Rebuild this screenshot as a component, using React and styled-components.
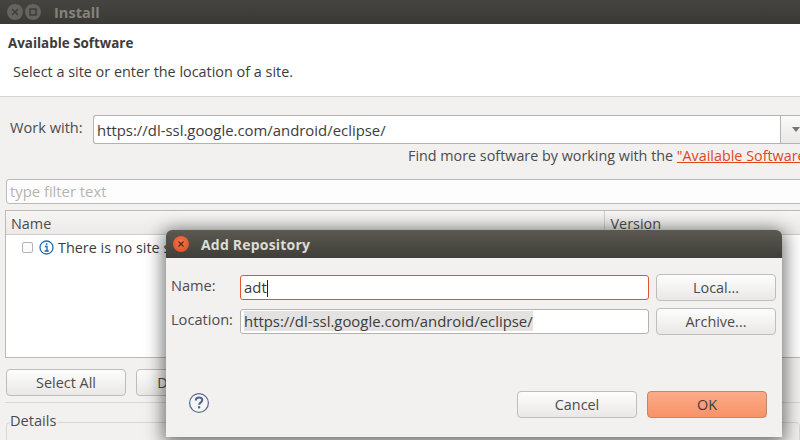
import styled, { createGlobalStyle } from "styled-components";

const Global = createGlobalStyle`
  html, body { margin: 0; padding: 0; background: #f2f1f0; }
  * { box-sizing: border-box; }
`;

const Win = styled.div`
  position: relative;
  width: 800px;
  height: 440px;
  overflow: hidden;
  background: #f2f1f0;
  font-family: "Open Sans", "Noto Sans", sans-serif;
  font-size: 14.4px;
  color: #4c4c4c;
`;

const TitleBar = styled.div`
  height: 24px;
  display: flex;
  align-items: center;
  padding-left: 7px;
  gap: 2px;
  background: linear-gradient(#45443f, #3a3935);
`;

const WinDot = styled.div`
  width: 16px;
  height: 16px;
  border-radius: 50%;
  background: #64635e;
  color: #3c3b37;
  display: flex;
  align-items: center;
  justify-content: center;
`;

const WinTitle = styled.div`
  margin-left: 11px;
  font-weight: 700;
  font-size: 14.6px;
  color: #85827c;
`;

const Banner = styled.div`
  height: 73px;
  background: #fff;
  border-bottom: 1px solid #d6d4d1;
  padding: 10px 8px 0;
`;

const BannerTitle = styled.div`
  font-weight: 700;
  font-size: 13.4px;
  line-height: 18px;
  color: #3c3c3c;
`;

const BannerText = styled.div`
  margin: 10px 0 0 5px;
  line-height: 20px;
  color: #3c3c3c;
`;

const WorkRow = styled.div`
  display: flex;
  align-items: stretch;
  height: 29px;
  margin-top: 18px;
`;

const WorkLabel = styled.div`
  width: 93px;
  padding: 1px 0 0 10px;
  line-height: 22px;
  font-size: 14.6px;
`;

const Combo = styled.div`
  flex: 1;
  background: #fff;
  border: 1px solid #b5b3b0;
  border-right: none;
  border-radius: 3px 0 0 3px;
  padding-left: 3px;
  line-height: 28px;
  font-size: 14.9px;
  color: #3c3c3c;
  white-space: nowrap;
`;

const ComboBtn = styled.div`
  width: 20px;
  border: 1px solid #b5b3b0;
  border-right: none;
  background: linear-gradient(#fafafa, #e9e8e6);
  display: flex;
  align-items: center;
  padding-left: 11px;
  &::after {
    content: "";
    border-left: 4px solid transparent;
    border-right: 4px solid transparent;
    border-top: 5px solid #77756f;
  }
`;

const Hint = styled.div`
  height: 35px;
  padding: 2px 0 0 408px;
  line-height: 20px;
  font-size: 14.35px;
  white-space: nowrap;
  overflow: hidden;
`;

const HintLink = styled.span`
  color: #e1461b;
  text-decoration: underline;
`;

const Filter = styled.div`
  height: 25px;
  margin: 0 -4px 0 6px;
  background: #fdfdfd;
  border: 1px solid #bcbab6;
  border-radius: 3px;
  padding-left: 3px;
  line-height: 23px;
  font-size: 14.8px;
  color: #b6b4b0;
`;

const Tree = styled.div`
  height: 148px;
  margin: 6px -4px 0 5px;
  background: #fff;
  border: 1px solid #bcbab6;
`;

const TreeHead = styled.div`
  display: flex;
  height: 24px;
  background: linear-gradient(#f6f5f4, #ebeae8);
  border-bottom: 1px solid #cfcdca;
  line-height: 26px;
`;

const HeadCell = styled.div`
  width: ${(p) => p.$w};
  padding-left: 5px;
  border-left: ${(p) => (p.$sep ? "1px solid #cfcdca" : "none")};
`;

const TreeRow = styled.div`
  display: flex;
  align-items: center;
  height: 24px;
  padding-left: 16px;
  color: #3c3c3c;
  white-space: nowrap;
`;

const Check = styled.div`
  width: 11px;
  height: 11px;
  border: 1px solid #b5b3b0;
  border-radius: 2px;
  background: #fbfbfb;
  margin-right: 6px;
`;

const InfoIcon = styled.svg`
  margin-right: 4px;
`;

const BtnRow = styled.div`
  display: flex;
  gap: 10px;
  margin: 11px 0 0 6px;
`;

const Btn = styled.div`
  width: 120px;
  height: 27px;
  flex: none;
  border: 1px solid ${(p) => (p.$primary ? "#b98a72" : "#bfbdb9")};
  border-radius: 4px;
  background: ${(p) =>
    p.$primary
      ? "linear-gradient(#fbab88, #f79268)"
      : "linear-gradient(#fdfdfd, #e9e8e6)"};
  text-align: center;
  line-height: 25px;
  color: ${(p) => (p.$primary ? "#3c3c3c" : "#4c4c4c")};
`;

const Rule = styled.div`
  height: 1px;
  margin: 6px 0 0 5px;
  background: #d9d7d4;
`;

const Group = styled.div`
  position: relative;
  height: 40px;
  margin: 19px 0 0 6px;
  border: 1px solid #d9d7d4;
  border-radius: 4px;
`;

const GroupLabel = styled.div`
  position: absolute;
  left: 3px;
  top: -13px;
  padding-right: 1px;
  line-height: 20px;
  font-size: 14.6px;
  background: #f2f1f0;
`;

const Dialog = styled.div`
  position: absolute;
  left: 166px;
  top: 230px;
  width: 616px;
  height: 207px;
  background: #f2f1f0;
  border-radius: 6px 6px 0 0;
  box-shadow: 0 3px 18px 3px rgba(0, 0, 0, 0.55);
  display: flex;
  flex-direction: column;
`;

const DialogBar = styled.div`
  height: 28px;
  flex: none;
  display: flex;
  align-items: center;
  padding-left: 7px;
  border-radius: 6px 6px 0 0;
  background: linear-gradient(#5b5950, #3f3e39);
`;

const CloseDot = styled.div`
  width: 16px;
  height: 16px;
  border-radius: 50%;
  background: radial-gradient(circle at 50% 40%, #f4794f, #d9471f);
  display: flex;
  align-items: center;
  justify-content: center;
`;

const DialogTitle = styled.div`
  margin-left: 12px;
  font-weight: 700;
  font-size: 14px;
  letter-spacing: 0.2px;
  color: #dfdbd2;
`;

const Form = styled.div`
  display: grid;
  grid-template-columns: 69px 409px 127px;
  row-gap: 7px;
  padding: 16px 0 0 5px;
`;

const FieldLabel = styled.div`
  line-height: 23px;
  align-self: start;
  font-size: 14.6px;
`;

const Field = styled.div`
  height: 25px;
  align-self: center;
  background: #fff;
  border: 1px solid ${(p) => (p.$focus ? "#e0562a" : "#b5b3b0")};
  border-radius: 3px;
  padding-left: 3px;
  line-height: 23px;
  font-size: 14.9px;
  color: #3c3c3c;
  white-space: nowrap;
`;

const Caret = styled.span`
  display: inline-block;
  width: 1px;
  height: 17px;
  vertical-align: -4px;
  background: #222;
`;

const Selected = styled.span`
  background: #e3e2e0;
`;

const SideBtn = styled(Btn)`
  margin-left: 7px;
`;

const Footer = styled.div`
  margin-top: auto;
  height: 46px;
  padding: 0 15px 19px 22px;
  display: flex;
  align-items: center;
  gap: 10px;
`;

const Help = styled.svg`
  margin: -3px auto 0 0;
`;

export default function App() {
  return (
    <Win>
      <Global />
      <TitleBar>
        <WinDot>
          <svg width="8" height="8" viewBox="0 0 8 8">
            <path d="M1 1l6 6M7 1L1 7" stroke="#3c3b37" strokeWidth="1.4" />
          </svg>
        </WinDot>
        <WinDot>
          <svg width="8" height="8" viewBox="0 0 8 8">
            <rect x="1" y="1" width="6" height="6" fill="none" stroke="#3c3b37" strokeWidth="1.4" />
          </svg>
        </WinDot>
        <WinTitle>Install</WinTitle>
      </TitleBar>
      <Banner>
        <BannerTitle>Available Software</BannerTitle>
        <BannerText>Select a site or enter the location of a site.</BannerText>
      </Banner>
      <WorkRow>
        <WorkLabel>Work with:</WorkLabel>
        <Combo>https://dl-ssl.google.com/android/eclipse/</Combo>
        <ComboBtn />
      </WorkRow>
      <Hint>
        Find more software by working with the <HintLink>"Available Software Sites"</HintLink> preferences.
      </Hint>
      <Filter>type filter text</Filter>
      <Tree>
        <TreeHead>
          <HeadCell $w="600px">Name</HeadCell>
          <HeadCell $w="199px" $sep>Version</HeadCell>
        </TreeHead>
        <TreeRow>
          <Check />
          <InfoIcon width="15" height="15" viewBox="0 0 15 15">
            <circle cx="7.5" cy="7.5" r="6.5" fill="#fff" stroke="#1f6fb5" strokeWidth="1.3" />
            <path d="M5.800 6.500h2.200v4.300M5.500 11h4.200" fill="none" stroke="#1f5f9e" strokeWidth="1.3" />
            <rect x="6.800" y="3.200" width="1.600" height="1.600" fill="#1f5f9e" />
          </InfoIcon>
          There is no site selected.
        </TreeRow>
      </Tree>
      <BtnRow>
        <Btn>Select All</Btn>
        <Btn>Deselect All</Btn>
      </BtnRow>
      <Rule />
      <Group>
        <GroupLabel>Details</GroupLabel>
      </Group>

      <Dialog>
        <DialogBar>
          <CloseDot>
            <svg width="8" height="8" viewBox="0 0 8 8">
              <path d="M1.500 1.500l5 5M6.500 1.500l-5 5" stroke="#5a2412" strokeWidth="1.2" />
            </svg>
          </CloseDot>
          <DialogTitle>Add Repository</DialogTitle>
        </DialogBar>
        <Form>
          <FieldLabel>Name:</FieldLabel>
          <Field $focus>adt<Caret /></Field>
          <SideBtn>Local...</SideBtn>
          <FieldLabel>Location:</FieldLabel>
          <Field><Selected>https://dl-ssl.google.com/android/eclipse/</Selected></Field>
          <SideBtn>Archive...</SideBtn>
        </Form>
        <Footer>
          <Help width="22" height="22" viewBox="0 0 22 22">
            <circle cx="11" cy="11" r="9.400" fill="#f6f6f6" stroke="#5a6f92" strokeWidth="1.3" />
            <path d="M7.800 8.400c0-2 1.500-3 3.300-3s3.200 1 3.200 2.700c0 2.500-3.200 2.500-3.200 4.700" fill="none" stroke="#4f6488" strokeWidth="2" />
            <rect x="10" y="14.200" width="2.200" height="2.200" fill="#4f6488" />
          </Help>
          <Btn>Cancel</Btn>
          <Btn $primary>OK</Btn>
        </Footer>
      </Dialog>
    </Win>
  );
}
